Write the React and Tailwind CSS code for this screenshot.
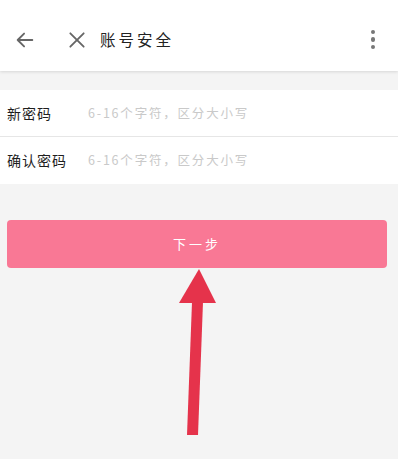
import React from 'react'

const cjk = { fontFamily: '"Noto Sans CJK SC", "Noto Sans", sans-serif' }

function Row({ label, hint, border }) {
  return (
    <div className={`flex items-center h-[47px] ${border ? 'border-b border-[#e6e6e6]' : ''}`}>
      <span className="w-[88px] pl-[7px] text-[14px] text-[#1e1e1e] tracking-[1px]">{label}</span>
      <span className="text-[12.5px] text-[#c9c9c9] tracking-[1.8px]">{hint}</span>
    </div>
  )
}

export default function App() {
  return (
    <div className="w-[398px] h-[459px] bg-[#f4f4f4] overflow-hidden" style={cjk}>
      <div className="h-[71px] pt-[8px] bg-white shadow-[0_1px_3px_rgba(0,0,0,0.12)] flex items-center pl-[14px] pr-[23px]">
        <svg width="22" height="22" viewBox="0 0 24 24" fill="none" stroke="#666" strokeWidth="2" strokeLinecap="round" strokeLinejoin="round">
          <path d="M20 12H4M11 5l-7 7 7 7" />
        </svg>
        <svg className="ml-[31px]" width="20" height="20" viewBox="0 0 24 24" fill="none" stroke="#666" strokeWidth="2.2" strokeLinecap="round">
          <path d="M4 4l16 16M20 4L4 20" />
        </svg>
        <span className="ml-[13px] text-[15.5px] text-[#222] tracking-[3px]">账号安全</span>
        <div className="ml-auto flex flex-col gap-[3px]">
          <span className="w-[4.5px] h-[4.5px] rounded-full bg-[#777]" />
          <span className="w-[4.5px] h-[4.5px] rounded-full bg-[#777]" />
          <span className="w-[4.5px] h-[4.5px] rounded-full bg-[#777]" />
        </div>
      </div>

      <div className="mt-[19px] bg-white">
        <Row label="新密码" hint="6-16个字符，区分大小写" border />
        <Row label="确认密码" hint="6-16个字符，区分大小写" />
      </div>

      <div className="pl-[7px] pr-[11px] mt-[36px]">
        <button className="w-full h-[48px] rounded-[4px] bg-[#f97895] text-white text-[13px] tracking-[3px]">
          下一步
        </button>
      </div>

      <div className="relative">
        <svg className="absolute left-0 top-0" width="398" height="200" viewBox="0 0 398 200">
          <polygon points="199,1 179,35 216,35" fill="#e5334b" />
          <polygon points="192,34 203,34 198,167 187,167" fill="#e5334b" />
        </svg>
      </div>
    </div>
  )
}
